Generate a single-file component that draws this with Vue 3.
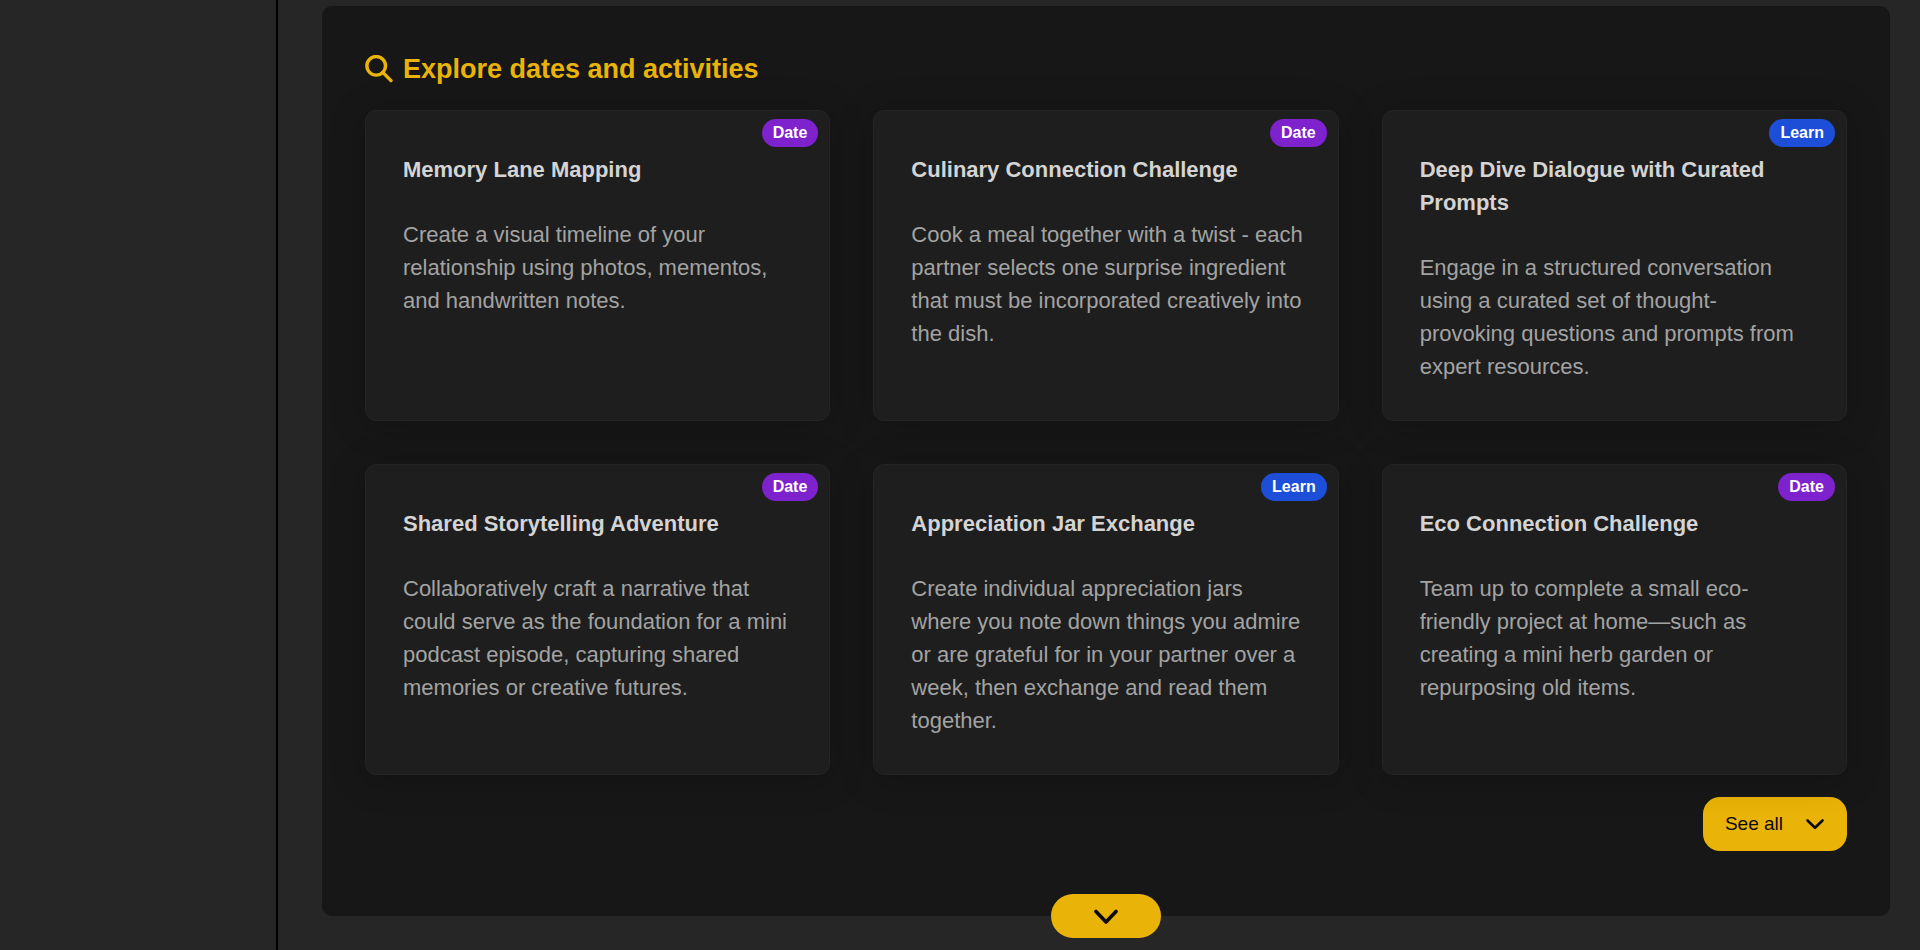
<script setup>
const activities = [
  {
    title: 'Memory Lane Mapping',
    type: 'Date',
    text: 'Create a visual timeline of your relationship using photos, mementos, and handwritten notes.',
  },
  {
    title: 'Culinary Connection Challenge',
    type: 'Date',
    text: 'Cook a meal together with a twist - each partner selects one surprise ingredient that must be incorporated creatively into the dish.',
  },
  {
    title: 'Deep Dive Dialogue with Curated Prompts',
    type: 'Learn',
    text: 'Engage in a structured conversation using a curated set of thought-provoking questions and prompts from expert resources.',
  },
  {
    title: 'Shared Storytelling Adventure',
    type: 'Date',
    text: 'Collaboratively craft a narrative that could serve as the foundation for a mini podcast episode, capturing shared memories or creative futures.',
  },
  {
    title: 'Appreciation Jar Exchange',
    type: 'Learn',
    text: 'Create individual appreciation jars where you note down things you admire or are grateful for in your partner over a week, then exchange and read them together.',
  },
  {
    title: 'Eco Connection Challenge',
    type: 'Date',
    text: 'Team up to complete a small eco-friendly project at home—such as creating a mini herb garden or repurposing old items.',
  },
]
</script>

<template>
  <div class="page">
    <aside class="sidebar"></aside>
    <main class="main">
      <section class="panel" aria-labelledby="explore-heading">
        <header class="heading">
          <svg class="search-icon" viewBox="0 0 28 28" aria-hidden="true">
            <circle cx="11.2" cy="10.8" r="9.3" />
            <path d="M17.8 17.4L26 25.6" />
          </svg>
          <h2 id="explore-heading">Explore dates and activities</h2>
        </header>

        <div class="grid">
          <article v-for="item in activities" :key="item.title" class="card">
            <span class="badge" :class="item.type.toLowerCase()">{{ item.type }}</span>
            <h3>{{ item.title }}</h3>
            <p>{{ item.text }}</p>
          </article>
        </div>

        <div class="actions">
          <button type="button" class="see-all">
            <span>See all</span>
            <svg viewBox="0 0 20 12" aria-hidden="true"><path d="M2.5 2.5L10 9.8L17.5 2.5" /></svg>
          </button>
        </div>

        <button type="button" class="more" aria-label="Show more">
          <svg viewBox="0 0 28 16" aria-hidden="true"><path d="M4 3.5L14 14L24 3.5" /></svg>
        </button>
      </section>
    </main>
  </div>
</template>

<style>
body {
  background: #262626;
}
</style>

<style scoped>
* {
  box-sizing: border-box;
}

.page {
  display: flex;
  min-height: 100vh;
  font-family: "Liberation Sans", Arial, sans-serif;
  background: #262626;
}

.sidebar {
  flex: 0 0 278px;
  border-right: 2px solid #000;
}

.main {
  flex: 1;
  min-width: 0;
  padding: 6px 30px 32px 44px;
}

.panel {
  position: relative;
  padding: 43px 43px 65px;
  border-radius: 10px;
  background: #171717;
}

.heading {
  display: flex;
  align-items: center;
  gap: 10px;
  height: 40px;
  margin-bottom: 21px;
  color: #eab308;
}

.heading h2 {
  margin: 0;
  font-size: 27px;
  line-height: 40px;
}

svg {
  fill: none;
  stroke: currentColor;
  stroke-linecap: round;
  stroke-linejoin: round;
  stroke-width: 3;
}

.search-icon {
  width: 28px;
  height: 28px;
  stroke-width: 3.4;
}

.grid {
  display: grid;
  grid-template-columns: repeat(3, minmax(0, 1fr));
  gap: 43px;
}

.card {
  position: relative;
  padding: 42px 34px 37px 37px;
  border: 1px solid #242424;
  border-radius: 11px;
  background: #1e1e1e;
  box-shadow: 0 4px 36px rgba(0, 0, 0, 0.22);
}

.card h3,
.card p {
  margin: 0;
  font-size: 22px;
  line-height: 33px;
}

.card h3 {
  margin-bottom: 32px;
  color: #d4d4d4;
}

.card p {
  color: #a3a3a3;
}

.badge {
  position: absolute;
  top: 8px;
  right: 11px;
  padding: 0 11px;
  border-radius: 14px;
  color: #fff;
  font-size: 16px;
  font-weight: 700;
  line-height: 28px;
}

.badge.date {
  background: #7e22ce;
}

.badge.learn {
  background: #1d4ed8;
}

.actions {
  display: flex;
  justify-content: flex-end;
  margin-top: 22px;
}

button {
  border: 0;
  color: #0a0a0a;
  background: #eab308;
  font-family: inherit;
  cursor: pointer;
}

.see-all {
  display: flex;
  align-items: center;
  gap: 22px;
  height: 54px;
  padding: 0 22px;
  border-radius: 17px;
  font-size: 19px;
}

.see-all svg {
  width: 20px;
  height: 12px;
  stroke-width: 2.6;
}

.more {
  position: absolute;
  bottom: -22px;
  left: 50%;
  display: flex;
  align-items: center;
  justify-content: center;
  width: 110px;
  height: 44px;
  border-radius: 22px;
  transform: translateX(-50%);
}

.more svg {
  width: 28px;
  height: 16px;
  stroke-width: 3.6;
}
</style>
